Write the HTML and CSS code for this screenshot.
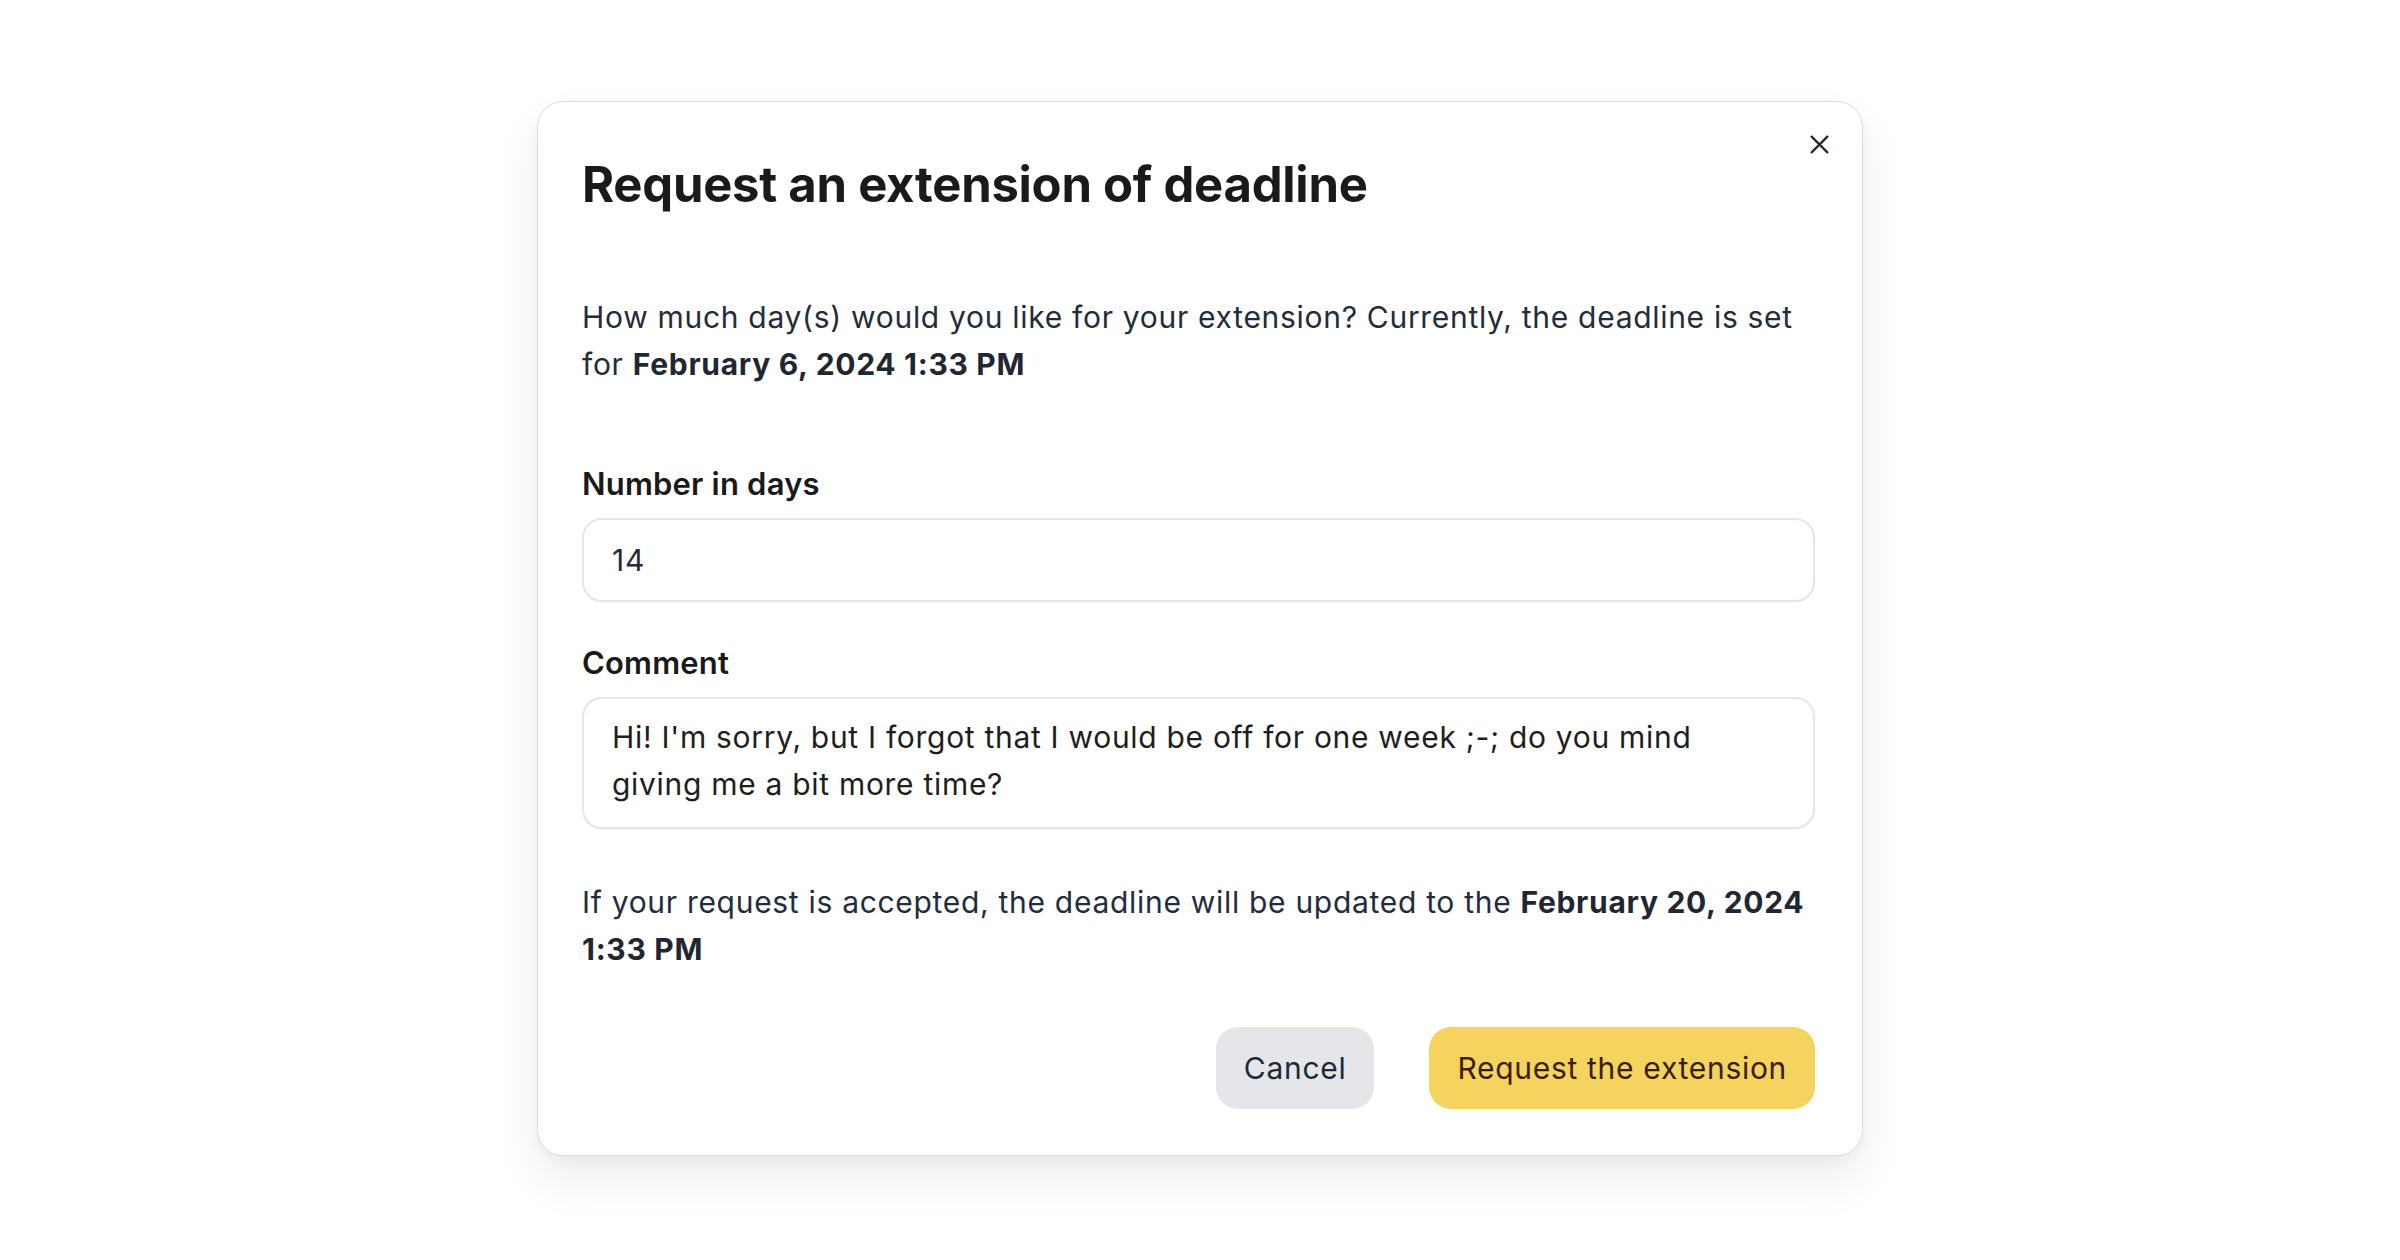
FILE: index.html
```html
<!DOCTYPE html>
<html lang="en">
<head>
<meta charset="utf-8">
<title>Request an extension of deadline</title>
<link rel="stylesheet" href="styles.css">
</head>
<body>
<div class="modal" role="dialog" aria-labelledby="modal-title">
  <button class="close" type="button" aria-label="Close">
    <svg viewBox="0 0 24 24" width="24" height="24" aria-hidden="true">
      <path d="M3 3 L21 21 M21 3 L3 21" fill="none" stroke="currentColor" stroke-width="2.6" stroke-linecap="round"/>
    </svg>
  </button>
  <h1 class="title" id="modal-title">Request an extension of deadline</h1>
  <p class="text intro">How much day(s) would you like for your extension? Currently, the deadline is set for <strong>February 6, 2024 1:33 PM</strong></p>
  <label class="label" for="days">Number in days</label>
  <input class="field input" id="days" type="text" value="14">
  <label class="label label-comment" for="comment">Comment</label>
  <textarea class="field textarea" id="comment">Hi! I'm sorry, but I forgot that I would be off for one week ;-; do you mind giving me a bit more time?</textarea>
  <p class="text outro">If your request is accepted, the deadline will be updated to the <strong>February 20, 2024 1:33 PM</strong></p>
  <div class="actions">
    <button class="btn btn-cancel" type="button">Cancel</button>
    <button class="btn btn-primary" type="button">Request the extension</button>
  </div>
</div>
</body>
</html>
```

FILE: styles.css
```css
* { box-sizing: border-box; }

html, body {
  margin: 0;
  padding: 0;
  background: #ffffff;
}

body {
  min-height: 1260px;
  display: flex;
  justify-content: center;
  align-items: flex-start;
  padding-top: 101px;
  font-family: Inter, "Noto Sans", sans-serif;
}

.modal {
  position: relative;
  width: 1326px;
  background: #ffffff;
  border: 1px solid #dcdcdc;
  border-radius: 26px;
  padding: 54px 47px 46px 44px;
  display: flex;
  flex-direction: column;
  box-shadow: 0 24px 48px rgba(0, 0, 0, 0.07), 0 6px 14px rgba(0, 0, 0, 0.04);
}

.close {
  position: absolute;
  top: 22px;
  right: 23px;
  width: 40px;
  height: 40px;
  padding: 0;
  border: 0;
  background: transparent;
  color: #1f2937;
  display: flex;
  align-items: center;
  justify-content: center;
  cursor: pointer;
}

.close svg { width: 21px; height: 21px; }

.title {
  margin: 0;
  font-family: Inter, "Noto Sans", sans-serif;
  font-weight: 700;
  font-size: 49px;
  line-height: 58px;
  letter-spacing: -0.25px;
  color: #1a1a1a;
}

.text {
  margin: 0;
  font-size: 30px;
  line-height: 47px;
  letter-spacing: 0.7px;
  color: #232c3a;
}

.text strong { font-weight: 700; color: #1f2733; }

.intro { margin-top: 80px; }

.label {
  display: block;
  margin-top: 78px;
  font-weight: 600;
  font-size: 31px;
  line-height: 36px;
  letter-spacing: 0.2px;
  color: #1a1a1a;
}

.label-comment { margin-top: 43px; }

.field {
  display: block;
  width: 100%;
  margin-top: 16px;
  border: 2px solid #e6e6ea;
  border-radius: 20px;
  background: #ffffff;
  box-shadow: 0 1px 2px rgba(0, 0, 0, 0.04);
  font-family: Inter, "Noto Sans", sans-serif;
  font-size: 30px;
  line-height: 47px;
  letter-spacing: 0.7px;
  outline: none;
}

.input {
  height: 84px;
  padding: 16px 28px;
  color: #232c3a;
}

.textarea {
  height: 132px;
  padding: 15px 70px 18px 28px;
  color: #1e1e1e;
  resize: none;
  overflow: hidden;
}

.outro { margin-top: 50px; }

.actions {
  margin-top: 54px;
  display: flex;
  justify-content: flex-end;
  gap: 55px;
}

.btn {
  height: 82px;
  padding: 0 28px;
  border: 0;
  border-radius: 22px;
  font-family: Inter, "Noto Sans", sans-serif;
  font-size: 30px;
  line-height: 1;
  letter-spacing: 0.7px;
  cursor: pointer;
}

.btn-cancel {
  background: #e5e6ea;
  color: #1f2937;
}

.btn-primary {
  background: #f4d35e;
  color: #3b1d06;
}
```
